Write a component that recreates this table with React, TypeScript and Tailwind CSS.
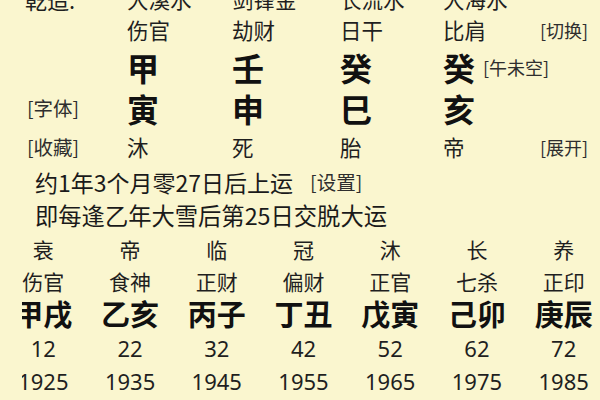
const font = { fontFamily: '"Noto Sans CJK SC", "Noto Sans", sans-serif' }
const digits = { fontFamily: '"Noto Sans", "Noto Sans CJK SC", sans-serif' }

const pillars = [
  { nayin: '大溪水', shishen: '伤官', gan: '甲', zhi: '寅', state: '沐' },
  { nayin: '剑锋金', shishen: '劫财', gan: '壬', zhi: '申', state: '死' },
  { nayin: '长流水', shishen: '日干', gan: '癸', zhi: '巳', state: '胎' },
  { nayin: '大海水', shishen: '比肩', gan: '癸', zhi: '亥', state: '帝' },
]

const widths = ['w-[105px]', 'w-[108px]', 'w-[103px]', 'w-[97px]']

const dayun = [
  { state: '衰', shishen: '伤官', gz: '甲戌', age: 12, year: 1925 },
  { state: '帝', shishen: '食神', gz: '乙亥', age: 22, year: 1935 },
  { state: '临', shishen: '正财', gz: '丙子', age: 32, year: 1945 },
  { state: '冠', shishen: '偏财', gz: '丁丑', age: 42, year: 1955 },
  { state: '沐', shishen: '正官', gz: '戊寅', age: 52, year: 1965 },
  { state: '长', shishen: '七杀', gz: '己卯', age: 62, year: 1975 },
  { state: '养', shishen: '正印', gz: '庚辰', age: 72, year: 1985 },
]

function PillarRow({ h, label, field, cls, extra }: {
  h: string
  label?: React.ReactNode
  field: 'nayin' | 'shishen' | 'gan' | 'zhi' | 'state'
  cls: string
  extra?: React.ReactNode
}) {
  return (
    <div className={`flex items-center pl-[27px] leading-none ${h}`}>
      <div className="w-[100px] shrink-0 text-[19.5px] text-[#2e2e2e] whitespace-nowrap">{label}</div>
      {pillars.map((p, i) => (
        <div key={i} className={`${widths[i]} shrink-0 flex items-center whitespace-nowrap ${cls}`}>
          {p[field]}
          {i === 3 && field === 'gan' && (
            <span className="ml-[8px] text-[18px] font-normal text-[#2e2e2e]">[午未空]</span>
          )}
        </div>
      ))}
      <div className="text-[18px] text-[#2e2e2e] whitespace-nowrap">{extra}</div>
    </div>
  )
}

export default function App() {
  return (
    <div className="w-[600px] h-[400px] overflow-hidden bg-[#faf6cf] text-[#1f1f1f]" style={font}>
      <div className="-mt-[15px]">
        <PillarRow
          h="h-[28px]"
          label={<span className="-ml-[2px] text-[22px] text-[#1f1f1f]">乾造:</span>}
          field="nayin"
          cls="text-[21.5px]"
        />
        <PillarRow h="h-[34px]" field="shishen" cls="text-[21.5px]" extra="[切换]" />
        <PillarRow h="h-[40px]" field="gan" cls="text-[32px] font-bold text-[#111]" />
        <PillarRow h="h-[41px]" label="[字体]" field="zhi" cls="text-[32px] font-bold text-[#111]" />
        <PillarRow h="h-[37px]" label="[收藏]" field="state" cls="text-[21.5px]" extra="[展开]" />

        <div className="flex items-center h-[34px] pl-[35px] leading-none text-[23px] text-[#1a1a1a] whitespace-nowrap">
          约1年3个月零27日后上运
          <span className="ml-[17px] text-[19.5px] text-[#2e2e2e]">[设置]</span>
        </div>
        <div className="flex items-center h-[34px] pl-[35px] leading-none text-[23.3px] text-[#1a1a1a] whitespace-nowrap">
          即每逢乙年大雪后第25日交脱大运
        </div>

        <div className="ml-[22px] overflow-hidden">
          <div className="-ml-[22px] w-[607px] leading-none">
            <div className="grid grid-cols-7 h-[33px] items-center text-center text-[21px]">
              {dayun.map((d, i) => <div key={i}>{d.state}</div>)}
            </div>
            <div className="grid grid-cols-7 h-[30px] items-center text-center text-[21px]">
              {dayun.map((d, i) => <div key={i}>{d.shishen}</div>)}
            </div>
            <div className="grid grid-cols-7 h-[35px] items-center text-center text-[29px] font-bold text-[#111]">
              {dayun.map((d, i) => <div key={i} className="whitespace-nowrap">{d.gz}</div>)}
            </div>
            <div className="grid grid-cols-7 h-[34px] items-center text-center text-[22px]" style={digits}>
              {dayun.map((d, i) => <div key={i}>{d.age}</div>)}
            </div>
            <div className="grid grid-cols-7 h-[32px] items-center text-center text-[22px]" style={digits}>
              {dayun.map((d, i) => <div key={i}>{d.year}</div>)}
            </div>
          </div>
        </div>
      </div>
    </div>
  )
}
